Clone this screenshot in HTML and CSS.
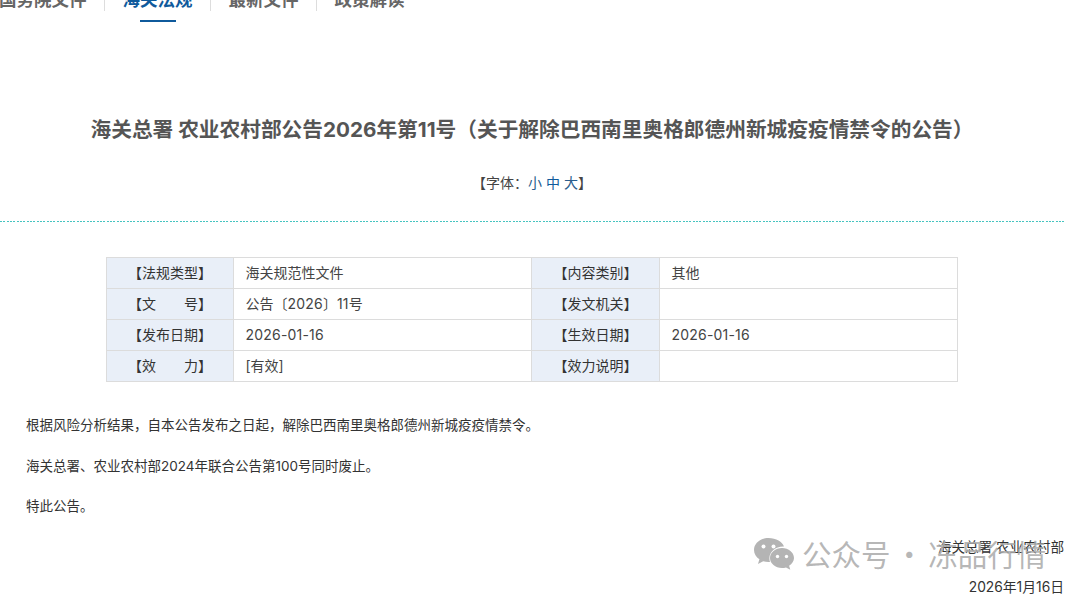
FILE: index.html
```html
<!DOCTYPE html>
<html lang="zh-CN">
<head>
<meta charset="utf-8">
<title>海关总署 农业农村部公告2026年第11号</title>
<link rel="stylesheet" href="styles.css">
</head>
<body>
<nav class="tabs">
  <div class="tab">国务院文件</div>
  <div class="tab active">海关法规</div>
  <div class="tab">最新文件</div>
  <div class="tab last">政策解读</div>
</nav>
<main class="article">
  <h1 class="title">海关总署 农业农村部公告2026年第11号（关于解除巴西南里奥格郎德州新城疫疫情禁令的公告）</h1>
  <div class="fontsize">【字体：<span class="fs">小</span> <span class="fs cur">中</span> <span class="fs">大</span>】</div>
  <div class="dash"></div>
  <table class="meta">
    <tr><th>【法规类型】</th><td class="v1">海关规范性文件</td><th class="th2">【内容类别】</th><td>其他</td></tr>
    <tr><th>【文&emsp;&emsp;号】</th><td class="v1">公告〔<span class="num">2026</span>〕<span class="num">11</span>号</td><th>【发文机关】</th><td></td></tr>
    <tr><th>【发布日期】</th><td class="v1"><span class="num">2026-01-16</span></td><th>【生效日期】</th><td><span class="num">2026-01-16</span></td></tr>
    <tr><th>【效&emsp;&emsp;力】</th><td class="v1">[有效]</td><th>【效力说明】</th><td></td></tr>
  </table>
  <div class="body">
    <p>根据风险分析结果，自本公告发布之日起，解除巴西南里奥格郎德州新城疫疫情禁令。</p>
    <p>海关总署、农业农村部2024年联合公告第100号同时废止。</p>
    <p>特此公告。</p>
  </div>
  <div class="sign">
    <div class="signline">海关总署 农业农村部</div>
    <div class="signline date">2026年1月16日</div>
  </div>
</main>
<div class="watermark">
  <svg class="wx" width="42" height="34" viewBox="0 0 42 34">
    <path fill="#b4b4b4" d="M15.5 1C7.5 1 1 6.4 1 13c0 3.800 2.100 7.100 5.400 9.300L5 27l5.200-2.700c1.600.5 3.400.8 5.300.8.500 0 1 0 1.500-.1-.4-1.200-.6-2.400-.6-3.700 0-6.500 6.100-11.700 13.700-11.700h.9C29.500 4.600 23.100 1 15.500 1z"/>
    <path fill="#b4b4b4" d="M41 21c0-5.500-5.400-10-12-10s-12 4.500-12 10 5.400 10 12 10c1.400 0 2.700-.2 4-.6l4.300 2.400-1.200-4C39 26.800 41 24.100 41 21z"/>
    <circle fill="#fff" cx="10.500" cy="9.500" r="2"/><circle fill="#fff" cx="20.500" cy="9.500" r="2"/>
    <circle fill="#fff" cx="24.500" cy="19.500" r="1.700"/><circle fill="#fff" cx="33.500" cy="19.500" r="1.700"/>
  </svg>
  <span class="wmtext">公众号 · 冻品行情</span>
</div>
</body>
</html>
```
FILE: styles.css
```css
html, body { margin: 0; padding: 0; }
body {
  width: 1080px; height: 598px; overflow: hidden; background: #fff; position: relative;
  font-family: "Inter", "Noto Sans CJK SC", "Noto Sans", sans-serif; color: #333;
}
.tabs { display: flex; height: 22px; margin-top: -11px; }
.tab {
  font-size: 17.5px; line-height: 22px; font-weight: 700; color: #666;
  width: 105px; text-align: center; border-right: 1px solid #ddd; height: 22px;
  position: relative; flex: none;
}
.tab:first-child { text-align: left; margin-left: -1px; white-space: nowrap; }
.tab.last { border-right: 0; }
.tab.active { color: #0f5a9c; }
.tab.active::after {
  content: ""; position: absolute; left: 35px; width: 36px; top: 31px; height: 2px; background: #0f5a9c;
}
.article { width: 1064px; }
.title {
  margin: 104px 0 0; font-size: 20.7px; line-height: 30px; font-weight: 700; color: #555; text-align: center;
  white-space: nowrap;
}
.fontsize { margin-top: 28px; text-align: center; font-size: 14px; line-height: 20px; color: #444; }
.fs { color: #2a5d8c; }
.fs.cur { color: #0f5a9c; }
.dash {
  margin-top: 28px; height: 1px;
  background: repeating-linear-gradient(90deg, #45c4c0 0, #45c4c0 2px, #fff 2px, #fff 3.33px);
}
.meta {
  margin: 35px 0 0 106px; width: 852px; border-collapse: collapse; table-layout: fixed; font-size: 14px; color: #444;
}
.meta th, .meta td { border: 1px solid #dcdcdc; height: 31px; padding: 0; box-sizing: border-box; line-height: 30px; }
.meta th { width: 127px; background: #e9eff8; font-weight: 400; text-align: center; color: #333; }
.meta th.th2 { width: 128px; }
.meta td { padding-left: 11.5px; }
.meta td.v1 { width: 298px; }
.num { letter-spacing: .2px; }
.body { margin: 33px 0 0 26px; font-size: 13.5px; line-height: 20px; color: #333; }
.body p { margin: 0 0 20.5px; }
.sign { text-align: right; font-size: 13.6px; line-height: 20px; margin-top: 12px; }
.date { margin-top: 20px; font-size: 13.8px; }
.watermark {
  position: absolute; left: 753px; top: 535px; display: flex; align-items: center; gap: 7px; pointer-events: none;
}
.wx { margin-top: 2px; }
.wmtext { font-family: "Noto Sans CJK SC", sans-serif; font-size: 29.5px; line-height: 36px; word-spacing: -2.5px; color: rgba(170,170,170,.85); white-space: nowrap; }
```
